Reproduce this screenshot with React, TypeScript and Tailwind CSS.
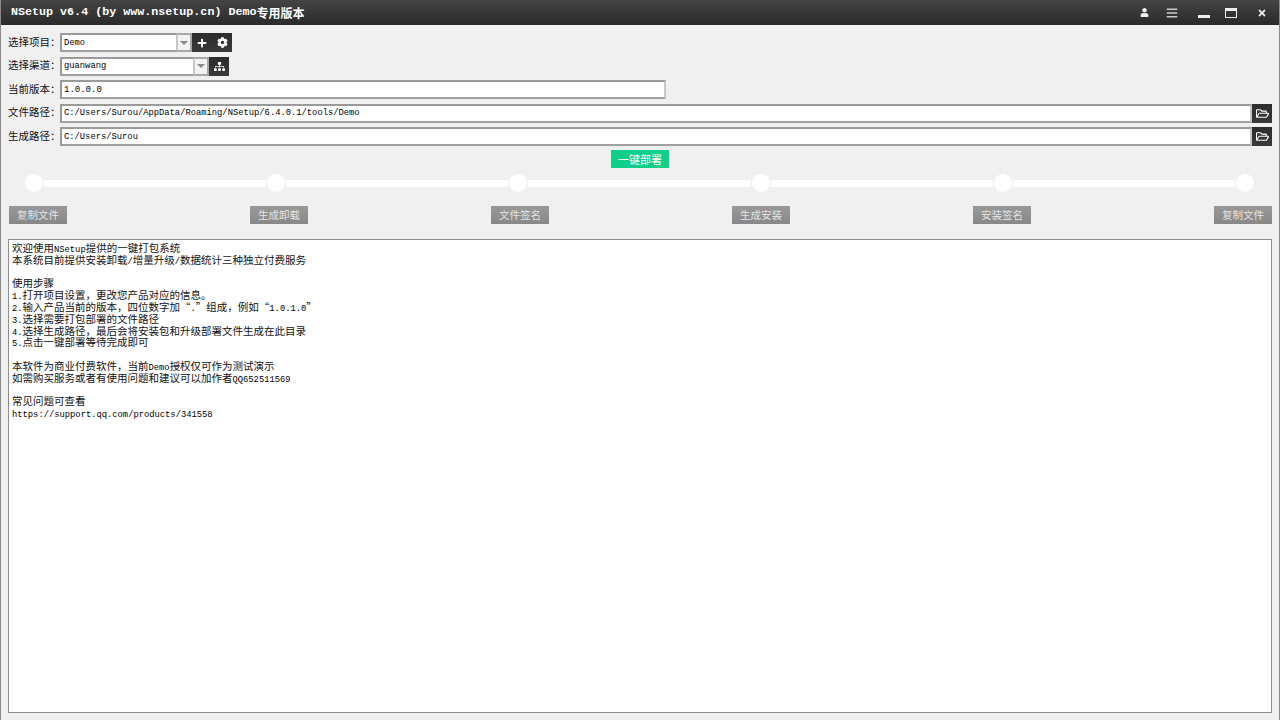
import React from "react";
import { FaUser, FaBars, FaPlus, FaCog, FaSitemap, FaRegFolderOpen, FaTimes } from "react-icons/fa";

const CJK = '"Noto Sans CJK SC", sans-serif';

function T({ s }: { s: string }) {
  const parts = s.split(/([\x20-\x7e]+)/).filter(Boolean);
  return (
    <>
      {parts.map((p, i) =>
        /^[\x20-\x7e]/.test(p) ? (
          <span key={i} className="font-['Liberation_Mono',monospace] text-[8.8px] text-black">
            {p}
          </span>
        ) : (
          <span key={i} className="text-[10.5px]">{p}</span>
        )
      )}
    </>
  );
}

function Label({ s }: { s: string }) {
  return <div className="w-[52px] shrink-0 whitespace-nowrap pb-[2px] text-[10.5px] text-[#111]">{s}</div>;
}

function Box({ v, className, big }: { v: string; className: string; big?: boolean }) {
  return (
    <div className={`flex h-full items-center border-2 border-[#9a9a9a] border-r-[#c8c8c8] border-b-[#a0a0a0] bg-white pl-[2px] pt-[2px] ${className}`}>
      <span className={`whitespace-pre font-['Liberation_Mono',monospace] text-black ${big ? "text-[9px]" : "text-[8.8px]"}`}>{v}</span>
    </div>
  );
}

function Arrow() {
  return (
    <div className="flex h-full w-[14px] items-center justify-center border-y-2 border-r-2 border-[#a8a8a8] bg-[#f2f2f2]">
      <div className="h-0 w-0 border-x-[4px] border-t-[4px] border-x-transparent border-t-[#8a8a8a]" />
    </div>
  );
}

function IconBtn({ children }: { children: React.ReactNode }) {
  return <div className="flex h-full w-[20px] items-center justify-center bg-gradient-to-b from-[#2c2c2c] to-[#3a3a3a] text-white">{children}</div>;
}

function Step({ s }: { s: string }) {
  return (
    <div className="flex h-[18px] w-[58px] items-center justify-center bg-gradient-to-b from-[#999] to-[#888] text-[10.5px] text-[#e4e4e4]">{s}</div>
  );
}

function Dot() {
  return <div className="h-[18px] w-[18px] shrink-0 rounded-full bg-white" />;
}
function Bar() {
  return <div className="mx-[1px] h-[7px] flex-1 bg-white" />;
}

const lines = [
  "欢迎使用NSetup提供的一键打包系统",
  "本系统目前提供安装卸载/增量升级/数据统计三种独立付费服务",
  "",
  "使用步骤",
  "1.打开项目设置\uFF0C更改您产品对应的信息。",
  "2.输入产品当前的版本\uFF0C四位数字加\u201C.\u201D组成\uFF0C例如\u201C1.0.1.0\u201D",
  "3.选择需要打包部署的文件路径",
  "4.选择生成路径\uFF0C最后会将安装包和升级部署文件生成在此目录",
  "5.点击一键部署等待完成即可",
  "",
  "本软件为商业付费软件\uFF0C当前Demo授权仅可作为测试演示",
  "如需购买服务或者有使用问题和建议可以加作者QQ652511569",
  "",
  "常见问题可查看",
  "https://support.qq.com/products/341558",
];

export default function App() {
  return (
    <div className="flex h-[720px] w-[1280px] flex-col overflow-hidden border-x border-[#8a8a8a] bg-[#f0f0f0]" style={{ fontFamily: CJK }}>
      <div className="-mx-[1px] flex h-[25px] shrink-0 items-center bg-gradient-to-b from-[#444] to-[#2a2a2a] pl-[11px] pr-[13px] text-white">
        <div className="flex flex-1 items-center font-bold leading-none">
          <span className="whitespace-pre font-['Liberation_Mono',monospace] text-[11.7px]">NSetup v6.4 (by www.nsetup.cn) Demo</span>
          <span className="text-[12px]">专用版本</span>
        </div>
        <FaUser className="mr-[17px] h-[9px] w-[9px] text-[#eee]" />
        <FaBars className="mr-[20px] h-[12px] w-[12px] text-[#ccc]" />
        <div className="mr-[15px] mt-[8px] h-[3px] w-[12px] bg-[#eee]" />
        <div className="mr-[20px] h-[10px] w-[12px] border border-t-[3px] border-[#eee]" />
        <FaTimes className="h-[10px] w-[10px] text-[#eee]" />
      </div>

      <div className="flex flex-col gap-[4.5px] px-[7px] pt-[8px]">
        <div className="flex h-[19px] items-center">
          <Label s={"选择项目\uFF1A"} />
          <Box v="Demo" className="w-[118px]" />
          <Arrow />
          <IconBtn><FaPlus className="h-[10px] w-[10px]" /></IconBtn>
          <IconBtn><FaCog className="h-[11px] w-[11px]" /></IconBtn>
        </div>
        <div className="flex h-[19px] items-center">
          <Label s={"选择渠道\uFF1A"} />
          <Box v="guanwang" className="w-[135px]" />
          <Arrow />
          <IconBtn><FaSitemap className="h-[11px] w-[11px]" /></IconBtn>
        </div>
        <div className="flex h-[19px] items-center">
          <Label s={"当前版本\uFF1A"} />
          <Box v="1.0.0.0" big className="w-[606px]" />
        </div>
        <div className="flex h-[19px] items-center">
          <Label s={"文件路径\uFF1A"} />
          <Box v="C:/Users/Surou/AppData/Roaming/NSetup/6.4.0.1/tools/Demo" className="flex-1" />
          <IconBtn><FaRegFolderOpen className="h-[13px] w-[13px]" /></IconBtn>
        </div>
        <div className="flex h-[19px] items-center">
          <Label s={"生成路径\uFF1A"} />
          <Box v="C:/Users/Surou" className="flex-1" />
          <IconBtn><FaRegFolderOpen className="h-[13px] w-[13px]" /></IconBtn>
        </div>
      </div>

      <div className="mt-[4px] flex justify-center">
        <div className="flex h-[18px] w-[58px] items-center justify-center bg-[#0fce87] text-[11px] text-white">一键部署</div>
      </div>

      <div className="mt-[6px] flex items-center pl-[24px] pr-[25px]">
        <Dot /><Bar /><Dot /><Bar /><Dot /><Bar /><Dot /><Bar /><Dot /><Bar /><Dot />
      </div>

      <div className="mt-[14px] flex justify-between pl-[8px] pr-[7px]">
        {["复制文件", "生成卸载", "文件签名", "生成安装", "安装签名", "复制文件"].map((s, i) => (
          <Step key={i} s={s} />
        ))}
      </div>

      <div className="mx-[7px] mt-[15px] h-[474px] border border-[#8f8f8f] bg-white pl-[3px] pt-[2px] text-[#111]">
        {lines.map((l, i) => (
          <div key={i} className="h-[11.8px] whitespace-pre text-[10.5px] leading-[11.8px]">
            <T s={l} />
          </div>
        ))}
      </div>
    </div>
  );
}
